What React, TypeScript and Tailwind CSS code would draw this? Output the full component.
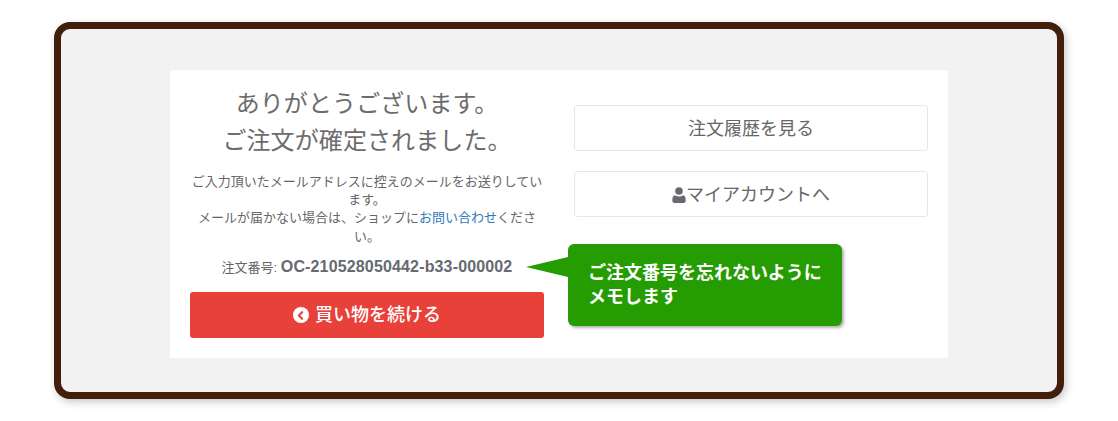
import { ChevronLeft } from "lucide-react";

const fontStack = "font-['Liberation_Sans','Noto_Sans_CJK_JP',sans-serif]";

function UserIcon() {
  return (
    <svg viewBox="0 0 14 16" className="h-[16px] w-[14px] fill-[#666a70]">
      <circle cx="7" cy="4" r="3.8" />
      <path d="M3 8.2C1.2 8.6 0.4 10 0.4 12.2v1.9C0.4 15.2 1.2 16 2.2 16h9.6c1 0 1.8-.8 1.8-1.9v-1.9c0-2.2-.8-3.6-2.6-4-1 .8-2.4 1.3-4 1.3s-3-.5-4-1.2z" />
    </svg>
  );
}

function OutlineButton({ children }: { children: React.ReactNode }) {
  return (
    <a className="flex h-[46px] items-center justify-center rounded-[3px] border border-[#e8e8e8] bg-white pt-[2px] text-[18px] text-[#666]">
      {children}
    </a>
  );
}

export default function App() {
  return (
    <div className={`${fontStack} h-[421px] w-[1118px] overflow-hidden bg-white pt-[22px] pl-[54px]`} lang="ja">
      <div className="flex h-[377px] w-[1010px] justify-center rounded-[16px] border-[7px] border-[#401f0b] bg-[#f2f2f2] pt-[41px] shadow-[2px_3px_8px_rgba(0,0,0,0.22)]">
        <div className="flex h-[288px] w-[778px] border-t border-[#f8f8f8] bg-white">
          <div className="w-[389px] pt-[15px] pr-[15px] pl-[20px] text-center text-[#6c6c6c]">
            <h1 className="text-[24px] leading-[36.5px] font-normal tracking-[0.1px]">
              ありがとうございます。
              <br />
              ご注文が確定されました。
            </h1>
            <p className="mt-[14px] text-[13px] leading-[18.2px] text-[#666]">
              ご入力頂いたメールアドレスに控えのメールをお送りしています。
              <br />
              メールが届かない場合は、ショップに<a className="text-[#337ab7]">お問い合わせ</a>ください。
            </p>
            <p className="mt-[11px] text-[13px] leading-[20px] text-[#666]">
              注文番号: <strong className="text-[16px] font-bold tracking-[0.15px] text-[#666a70]">OC-210528050442-b33-000002</strong>
            </p>
            <a className="mt-[14px] flex h-[46px] items-center justify-center gap-[6px] rounded-[3px] bg-[#e8413a] pt-[1px] text-[18px] font-medium text-white">
              <span className="flex h-[16px] w-[16px] items-center justify-center rounded-full bg-white">
                <ChevronLeft size={13} strokeWidth={4} className="mr-[1px] text-[#e8413a]" />
              </span>
              買い物を続ける
            </a>
          </div>
          <div className="w-[389px] pt-[34px] pr-[20px] pl-[15px]">
            <div className="flex flex-col gap-[20px]">
              <OutlineButton>注文履歴を見る</OutlineButton>
              <OutlineButton>
                <UserIcon />
                マイアカウントへ
              </OutlineButton>
            </div>
            <div className="relative mt-[27px] ml-[-6px] h-[82px] w-[274px] rounded-[6px] bg-[#249c02] px-[20px] pt-[17px] text-[18px] leading-[24px] font-bold text-white shadow-[2px_2px_3px_rgba(0,0,0,0.3)]">
              <span className="absolute top-[13px] left-[-42px] h-[20px] w-[42px] bg-[#249c02] [clip-path:polygon(0_50%,100%_0,100%_100%)]" />
              ご注文番号を忘れないように
              <br />
              メモします
            </div>
          </div>
        </div>
      </div>
    </div>
  );
}
